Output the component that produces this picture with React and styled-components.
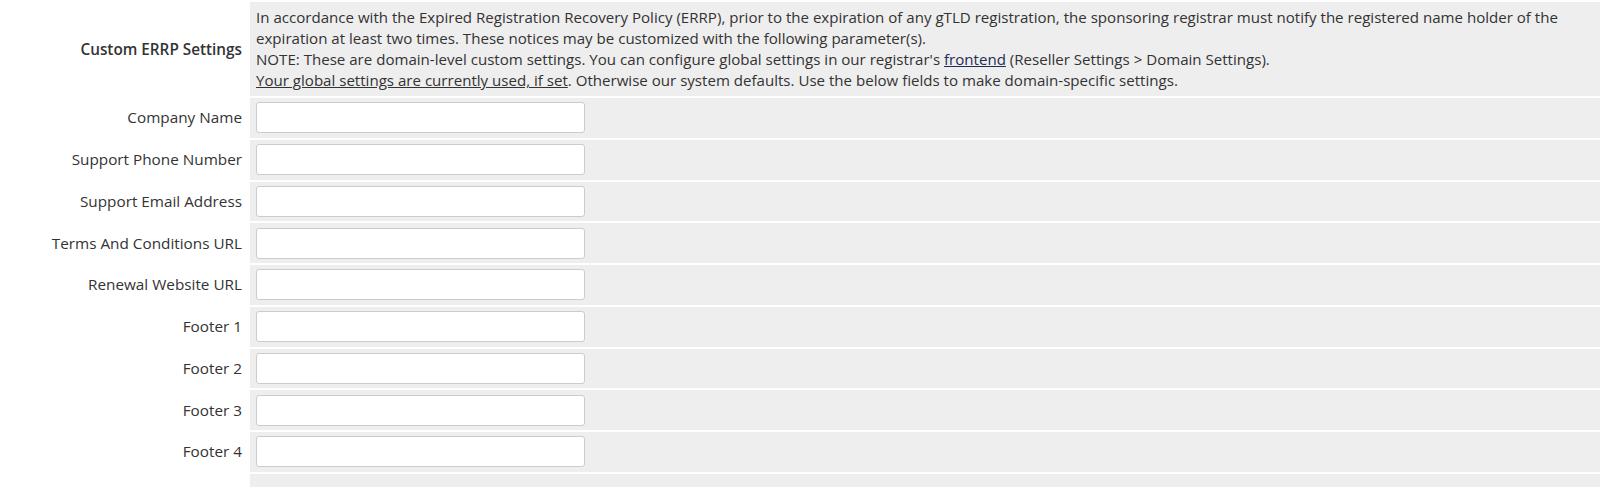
import styled, { createGlobalStyle } from 'styled-components';

const GlobalStyle = createGlobalStyle`
  html, body {
    margin: 0;
    padding: 0;
    background: #ffffff;
  }

  body {
    font-family: 'Open Sans', 'Noto Sans', sans-serif;
    font-size: 15px;
    color: #333333;
  }
`;

const SettingsTable = styled.div`
  display: flex;
  flex-direction: column;
  gap: 2px;
  padding: 2px 0 0 2px;
`;

const Row = styled.div`
  display: grid;
  grid-template-columns: 246px 1fr;
  column-gap: 2px;
  min-height: 39.75px;
`;

const Label = styled.div`
  display: flex;
  align-items: center;
  justify-content: flex-end;
  padding-right: 6px;
  text-align: right;
  font-size: 15.3px;
  line-height: 21px;
  font-weight: ${({ $bold }) => ($bold ? 600 : 400)};
  color: #333333;
`;

const Cell = styled.div`
  display: flex;
  align-items: center;
  background: #eeeeee;
  padding: 0 6px;
`;

const Notice = styled.div`
  background: #eeeeee;
  padding: 5px 6px 5px 6px;
  font-size: 15.08px;
  line-height: 21px;
  white-space: nowrap;
  color: #333333;
`;

const Link = styled.a`
  color: #1f2d55;
  text-decoration: underline;
  cursor: pointer;
`;

const Underlined = styled.span`
  text-decoration: underline;
`;

const TextInput = styled.input`
  box-sizing: border-box;
  width: 329px;
  height: 31px;
  border: 1px solid #cccccc;
  border-radius: 3px;
  background: #ffffff;
  padding: 4px 8px;
  font-family: inherit;
  font-size: 14px;
  color: #333333;
  outline: none;
`;

const fields = [
  'Company Name',
  'Support Phone Number',
  'Support Email Address',
  'Terms And Conditions URL',
  'Renewal Website URL',
  'Footer 1',
  'Footer 2',
  'Footer 3',
  'Footer 4',
];

const App = () => {
  return (
    <>
      <GlobalStyle />
      <SettingsTable>
        <Row>
          <Label $bold>Custom ERRP Settings</Label>
          <Notice>
            In accordance with the Expired Registration Recovery Policy (ERRP), prior to the expiration of any gTLD
            registration, the sponsoring registrar must notify the registered name holder of the
            <br />
            expiration at least two times. These notices may be customized with the following parameter(s).
            <br />
            NOTE: These are domain-level custom settings. You can configure global settings in our registrar's{' '}
            <Link>frontend</Link> (Reseller Settings &gt; Domain Settings).
            <br />
            <Underlined>Your global settings are currently used, if set</Underlined>. Otherwise our system defaults.
            Use the below fields to make domain-specific settings.
          </Notice>
        </Row>
        {fields.map((name) => (
          <Row key={name}>
            <Label>{name}</Label>
            <Cell>
              <TextInput type="text" />
            </Cell>
          </Row>
        ))}
        <Row>
          <Label />
          <Cell />
        </Row>
      </SettingsTable>
    </>
  );
};

export default App;
